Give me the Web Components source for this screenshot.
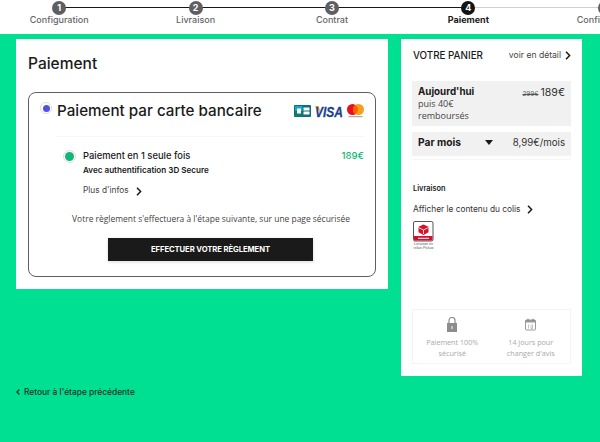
<!DOCTYPE html>
<html lang="fr">
<head>
<meta charset="UTF-8" />
<title>Paiement</title>
<style>
    html, body { margin: 0; height: 442px; overflow: hidden; }
    body { background: #00e093; font-family: Inter, "Liberation Sans", sans-serif; color: #1a1a1a; }
</style>
</head>
<body>
<check-stepper>
    <check-step num="1" label="Configuration"></check-step>
    <check-step num="2" label="Livraison"></check-step>
    <check-step num="3" label="Contrat"></check-step>
    <check-step num="4" label="Paiement" state="current"></check-step>
    <check-step num="5" label="Confirmation" state="todo"></check-step>
</check-stepper>
<checkout-page>
    <div slot="main">
        <payment-card></payment-card>
        <back-link>Retour à l'étape précédente</back-link>
    </div>
    <cart-panel slot="side"></cart-panel>
</checkout-page>

<script>
    const CHEVRON = `<svg width="6" height="9" viewBox="0 0 6 9" fill="none" stroke="#1a1a1a" stroke-width="1.5"><path d="M1 .8 4.6 4.5 1 8.2"/></svg>`;

    class CheckStepper extends HTMLElement {
        constructor() {
            super();
            this.attachShadow({ mode: 'open' }).innerHTML = `
                <style>
                    :host { display: block; height: 34px; background: #fff; overflow: hidden; }
                    .row { display: grid; grid-template-columns: repeat(5, 136.4px); margin-left: -9px; width: 700px; }
                </style>
                <div class="row"><slot></slot></div>`;
        }
    }

    class CheckStep extends HTMLElement {
        constructor() {
            super();
            const num = this.getAttribute('num');
            const label = this.getAttribute('label');
            const state = this.getAttribute('state');
            const dot = state === 'current' ? '#141414' : '#5f5f61';
            const after = state === 'current' || state === 'todo' ? '#cfcfcf' : '#1a1a1a';
            this.attachShadow({ mode: 'open' }).innerHTML = `
                <style>
                    :host { display: block; position: relative; text-align: center; height: 34px; }
                    .line { position: absolute; left: 50%; width: 100%; top: 7px; height: 1px; background: ${after}; }
                    .dot {
                        position: relative; box-sizing: border-box; width: 14px; height: 14px; margin: 1px auto 0;
                        border-radius: 50%; background: ${dot}; color: #fff;
                        font: 700 9px/14px Inter, "Liberation Sans", sans-serif;
                    }
                    .label {
                        margin-top: -1px; font-size: 9px; line-height: 11px; white-space: nowrap;
                        font-weight: ${state === 'current' ? 700 : 500};
                        color: ${state === 'current' ? '#1a1a1a' : '#666'};
                    }
                </style>
                <div class="line"></div>
                <div class="dot">${num}</div>
                <div class="label">${label}</div>`;
        }
    }

    class CheckoutPage extends HTMLElement {
        constructor() {
            super();
            this.attachShadow({ mode: 'open' }).innerHTML = `
                <style>
                    :host { display: flex; gap: 13px; padding: 5px 0 0 16px; align-items: flex-start; }
                    .main { width: 372px; flex: none; }
                    .side { width: 181px; flex: none; }
                </style>
                <div class="main"><slot name="main"></slot></div>
                <div class="side"><slot name="side"></slot></div>`;
        }
    }

    class PaymentCard extends HTMLElement {
        constructor() {
            super();
            this.attachShadow({ mode: 'open' }).innerHTML = `
                <style>
                    :host { display: block; box-sizing: border-box; height: 250px; background: #fff; padding: 15px 12px 0 12px; }
                    h1 { margin: 0 0 19px; font-size: 15.5px; line-height: 19px; font-weight: 500; color: #1a1a1a; }
                    .box { box-sizing: border-box; height: 185px; border: 1px solid #5f5f5f; border-radius: 8px; padding: 0 11px 0 12px; }
                    .head { display: flex; align-items: center; height: 43px; border-bottom: 1px solid #f6f6f6; margin-left: 16px; position: relative; }
                    .radio {
                        box-sizing: border-box; flex: none; border-radius: 50%; border: 1px solid #ddd;
                        display: flex; align-items: center; justify-content: center; background: #fff;
                    }
                    .radio i { display: block; border-radius: 50%; }
                    .head .radio { position: absolute; left: -17px; top: 9px; width: 12px; height: 12px; }
                    .head .radio i { width: 7px; height: 7px; background: #5551e0; }
                    .head b { font-size: 15.2px; font-weight: 500; line-height: 18px; margin-top: -8px; flex: 1; white-space: nowrap; color: #1a1a1a; }
                    .logos { display: flex; align-items: center; gap: 3px; margin-top: -7px; }
                    .logos svg { overflow: visible; }
                    .opt { display: flex; margin: 12px 0 0 22px; }
                    .opt .radio { width: 13px; height: 13px; margin: 1px 7px 0 0; }
                    .opt .radio i { width: 9px; height: 9px; background: #0fb877; }
                    .opt .text { flex: 1; }
                    .t1 { font-size: 9.4px; font-weight: 500; line-height: 14px; white-space: nowrap; }
                    .t2 { font-size: 8.1px; font-weight: 600; line-height: 14px; white-space: nowrap; }
                    .more { display: flex; align-items: center; gap: 7px; margin-top: 6px; font-size: 8.3px; line-height: 14px; color: #444; }
                    .more svg { margin-top: 2px; }
                    .price { font-size: 9.6px; line-height: 14px; font-weight: 500; color: #12b87a; }
                    .note { text-align: center; margin: 15px 0 0 17px; font: 8.45px/14px "Open Sans", sans-serif; color: #444; white-space: nowrap; }
                    .pay {
                        display: block; box-sizing: border-box; width: 205px; height: 23px; margin: 12px 0 0 67px; padding: 0;
                        border: 0; background: #1a1a1a; color: #fff; box-shadow: 0 1px 3px rgba(0,0,0,.15);
                        font: 700 7.7px/23px Inter, "Liberation Sans", sans-serif; letter-spacing: -.1px; text-align: center;
                    }
                </style>
                <h1>Paiement</h1>
                <div class="box">
                    <div class="head">
                        <span class="radio"><i></i></span>
                        <b>Paiement par carte bancaire</b>
                        <span class="logos">
                            <svg width="17" height="12" viewBox="0 0 17 12">
                                <rect width="17" height="12" rx="1" fill="#0f6d80"/>
                                <rect x="1" y="1" width="7.5" height="5" fill="#19a5c4"/>
                                <rect x="1" y="6" width="7.5" height="5" fill="#0f7d6c"/>
                                <rect x="3" y="3.5" width="4" height="5" fill="#fff"/>
                                <rect x="9.5" y="2.5" width="6" height="3" fill="#fff"/>
                                <rect x="9.5" y="6.5" width="6" height="3" fill="#fff"/>
                            </svg>
                            <svg width="30" height="14" viewBox="0 0 30 14">
                                <path d="M0 2h3.5c.8 0 1.400.4 1.600 1.200L6.400 9 3 3C2.300 2.600 1 2.200 0 2.200z" fill="#f0a51e"/>
                                <text x="1" y="13" font-family="Liberation Sans, sans-serif" font-size="15" font-weight="700" font-style="italic" fill="#1a3f8f" stroke="#1a3f8f" stroke-width=".3" textLength="28" lengthAdjust="spacingAndGlyphs">VISA</text>
                            </svg>
                            <svg width="17" height="14" viewBox="0 0 17 14">
                                <circle cx="5.5" cy="5.5" r="5.5" fill="#e8101f"/>
                                <circle cx="11.5" cy="5.5" r="5.5" fill="#f79e1b"/>
                                <path d="M8.5 .9a5.5 5.5 0 0 1 0 9.200 5.5 5.5 0 0 1 0-9.200z" fill="#ff5f00"/>
                                <rect x="1.5" y="12.200" width="14" height="1" fill="#999"/>
                            </svg>
                        </span>
                    </div>
                    <div class="opt">
                        <span class="radio"><i></i></span>
                        <div class="text">
                            <div class="t1">Paiement en 1 seule fois</div>
                            <div class="t2">Avec authentification 3D Secure</div>
                            <div class="more">Plus d'infos ${CHEVRON}</div>
                        </div>
                        <div class="price">189€</div>
                    </div>
                    <div class="note">Votre règlement s'effectuera à l'étape suivante, sur une page sécurisée</div>
                    <div class="pay" role="button">EFFECTUER VOTRE RÈGLEMENT</div>
                </div>`;
        }
    }

    class BackLink extends HTMLElement {
        constructor() {
            super();
            this.attachShadow({ mode: 'open' }).innerHTML = `
                <style>
                    :host { display: flex; align-items: center; gap: 4px; margin-top: 97px; font-size: 8.4px; line-height: 12px; font-weight: 500; color: #12322a; }
                    svg { transform: scaleX(-1); }
                </style>
                <svg width="4" height="6" viewBox="0 0 6 9" fill="none" stroke="#12322a" stroke-width="1.8"><path d="M1 .8 4.6 4.5 1 8.2"/></svg>
                <slot></slot>`;
        }
    }

    class CartPanel extends HTMLElement {
        constructor() {
            super();
            this.attachShadow({ mode: 'open' }).innerHTML = `
                <style>
                    :host { display: block; box-sizing: border-box; height: 337px; background: #fff; padding: 10px 11px 0 11px; color: #1a1a1a; }
                    .top { display: flex; justify-content: space-between; align-items: center; height: 13px; padding-left: 1px; }
                    .top b { font-size: 9.8px; font-weight: 500; white-space: nowrap; }
                    .detail { display: flex; align-items: center; gap: 4px; font-size: 8.6px; color: #444; white-space: nowrap; margin-top: -1px; }
                    .today, .monthly { background: #f1f1f1; display: flex; justify-content: space-between; padding: 0 6px; }
                    .today { height: 45px; margin-top: 19px; }
                    .today b { display: block; font-size: 9.8px; font-weight: 700; line-height: 12px; margin-top: 5px; white-space: nowrap; }
                    .small { font: 9px/12px "Open Sans", sans-serif; color: #444; }
                    .amount { display: flex; align-items: baseline; gap: 2px; font-size: 10.6px; line-height: 13px; margin-top: 5px; color: #333; white-space: nowrap; }
                    .amount s { font-size: 6.4px; color: #555; }
                    .monthly { height: 24px; margin-top: 6px; align-items: center; padding-bottom: 4px; box-sizing: border-box; }
                    .monthly b { font-size: 10.2px; font-weight: 700; width: 67px; }
                    .monthly .caret { width: 0; height: 0; border: 4.5px solid transparent; border-top: 5px solid #1a1a1a; border-bottom: 0; }
                    .monthly span:last-child { font-size: 9.7px; color: #333; margin-left: auto; white-space: nowrap; }
                    .rule { height: 1px; background: #f6f6f6; margin-top: 3px; }
                    h3 { margin: 23px 0 0 1px; font-size: 7.4px; line-height: 11px; font-weight: 600; }
                    .show { display: flex; align-items: center; gap: 7px; margin: 9px 0 0 1px; font-size: 8.3px; line-height: 12px; color: #333; white-space: nowrap; }
                    .relay { display: block; margin: 6px 0 0 1px; }
                    .safe { display: flex; box-sizing: border-box; height: 55px; margin-top: 60px; border: 1px solid #f4f4f4; text-align: center; }
                    .safe div { flex: 1; display: flex; flex-direction: column; align-items: center; padding-top: 7px; font: 7.2px/11px "Open Sans", sans-serif; color: #a9a9a9; }
                    .safe svg { height: 15px; margin-bottom: 5px; flex: none; }
                </style>
                <div class="top"><b>VOTRE PANIER</b><span class="detail">voir en détail ${CHEVRON}</span></div>
                <div class="today">
                    <div><b>Aujourd'hui</b><div class="small">puis 40€<br>remboursés</div></div>
                    <div class="amount"><s>299€</s><span>189€</span></div>
                </div>
                <div class="monthly"><b>Par mois</b><span class="caret"></span><span>8,99€/mois</span></div>
                <div class="rule"></div>
                <h3>Livraison</h3>
                <div class="show">Afficher le contenu du colis ${CHEVRON}</div>
                <svg class="relay" width="21" height="28" viewBox="0 0 21 28">
                    <rect x=".5" y=".5" width="19.5" height="19.5" rx="1.5" fill="#fff" stroke="#555"/>
                    <rect x="1" y="15" width="18.5" height="4.5" fill="#d8102c"/>
                    <rect x="5" y="16.8" width="11" height="1" fill="#fff"/>
                    <path d="M10.5 3.5l5 2.2v5.5l-5 2.800-5-2.800V5.700z" fill="#d8102c"/>
                    <path d="M10.5 9v4M5.5 6.500l5 2.500 5-2.500" stroke="#fff" stroke-width=".8" fill="none"/>
                    <text x="10.5" y="23.8" text-anchor="middle" font-family="Liberation Sans, sans-serif" font-size="3.5" fill="#555">Livraison en</text>
                    <text x="10.5" y="27.5" text-anchor="middle" font-family="Liberation Sans, sans-serif" font-size="3.5" fill="#555">relais Pickup</text>
                </svg>
                <div class="safe">
                    <div>
                        <svg width="10" height="15" viewBox="0 0 10 15">
                            <path d="M2 7V3.500a3 3 0 0 1 6 0V7" fill="none" stroke="#8c8c8c" stroke-width="1.2"/>
                            <rect y="6" width="10" height="9" fill="#8c8c8c"/>
                            <rect x="4.3" y="9" width="1.4" height="3" fill="#ddd"/>
                        </svg>
                        Paiement 100%<br>sécurisé
                    </div>
                    <div>
                        <svg width="11" height="15" viewBox="0 -1 11 15">
                            <rect x=".5" y="2" width="10" height="10" rx="1" fill="#fff" stroke="#999"/>
                            <rect x=".5" y="2" width="10" height="2.5" fill="#999"/>
                            <path d="M3 .8v2M8 .8v2" stroke="#777"/>
                            <path d="M3.500 6.500v4M6 6.500v4h1.500v-4" stroke="#aaa" stroke-width=".7" fill="none"/>
                        </svg>
                        14 jours pour<br>changer d'avis
                    </div>
                </div>`;
        }
    }

    window.customElements.define('check-stepper', CheckStepper);
    window.customElements.define('check-step', CheckStep);
    window.customElements.define('checkout-page', CheckoutPage);
    window.customElements.define('payment-card', PaymentCard);
    window.customElements.define('back-link', BackLink);
    window.customElements.define('cart-panel', CartPanel);
</script>
</body>
</html>
